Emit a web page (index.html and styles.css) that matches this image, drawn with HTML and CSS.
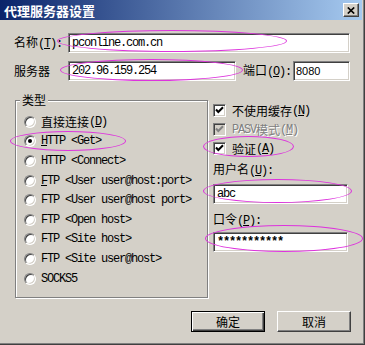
FILE: index.html
```html
<!DOCTYPE html>
<html lang="zh-CN">
<head>
  <meta charset="UTF-8">
  <title>代理服务器设置</title>
  <link rel="stylesheet" href="styles.css">
</head>
<body>

  <div class="window">
    <div class="titlebar">
      <span class="title">代理服务器设置</span>
      <span class="close-btn">
        <svg width="8" height="7" viewBox="0 0 8 7"><path d="M0.8 0.5 L7.2 6.5 M7.2 0.5 L0.8 6.5" stroke="#000" stroke-width="1.7"/></svg>
      </span>
    </div>

    <div class="content">
      <div class="row">
        <span class="label label-name">名称<span class="m">(<u>T</u>):</span></span>
        <div class="field field-name"><span class="m">pconline.com.cn</span></div>
      </div>

      <div class="row row-server">
        <span class="label label-name">服务器</span>
        <div class="field field-server"><span class="m">202.96.159.254</span></div>
        <span class="label label-port">端口<span class="m">(<u>O</u>):</span></span>
        <div class="field field-port"><span class="num">8080</span></div>
      </div>

      <div class="columns">
        <div class="group">
          <span class="legend">类型</span>
          <div class="radios">
            <div class="radio-row"><span class="radio"></span>直接连接<span class="m">(<u>D</u>)</span></div>
            <div class="radio-row"><span class="radio checked"></span><span class="m"><u>H</u>TTP &lt;Get&gt;</span></div>
            <div class="radio-row"><span class="radio"></span><span class="m">HTTP &lt;Connect&gt;</span></div>
            <div class="radio-row"><span class="radio"></span><span class="m"><u>F</u>TP &lt;User user@host:port&gt;</span></div>
            <div class="radio-row"><span class="radio"></span><span class="m">FTP &lt;User user@host port&gt;</span></div>
            <div class="radio-row"><span class="radio"></span><span class="m">FTP &lt;Open host&gt;</span></div>
            <div class="radio-row"><span class="radio"></span><span class="m">FTP &lt;Site host&gt;</span></div>
            <div class="radio-row"><span class="radio"></span><span class="m">FTP &lt;Site user@host&gt;</span></div>
            <div class="radio-row"><span class="radio"></span><span class="m">SOCKS5</span></div>
          </div>
        </div>

        <div class="options">
          <div class="check-row first">
            <span class="check"><svg width="11" height="11" viewBox="0 0 11 11"><path d="M2 4.5 L4.3 7 L9 2.2" stroke="#000" stroke-width="2" fill="none"/></svg></span>
            不使用缓存<span class="m">(<u>N</u>)</span>
          </div>
          <div class="check-row disabled">
            <span class="check off"><svg width="11" height="11" viewBox="0 0 11 11"><path d="M2 4.5 L4.3 7 L9 2.2" stroke="#808080" stroke-width="2" fill="none"/></svg></span>
            <span class="m">PASV</span>模式<span class="m">(<u>M</u>)</span>
          </div>
          <div class="check-row">
            <span class="check"><svg width="11" height="11" viewBox="0 0 11 11"><path d="M2 4.5 L4.3 7 L9 2.2" stroke="#000" stroke-width="2" fill="none"/></svg></span>
            验证<span class="m">(<u>A</u>)</span>
          </div>

          <div class="opt-label">用户名<span class="m">(<u>U</u>):</span></div>
          <div class="field field-user"><span class="m">abc</span></div>

          <div class="opt-label pw">口令<span class="m">(<u>P</u>):</span></div>
          <div class="field field-pass"><span class="m stars">***********</span></div>
        </div>
      </div>

      <div class="buttons">
        <div class="btn btn-default">确定</div>
        <div class="btn">取消</div>
      </div>
    </div>

    <!-- hand-drawn highlight rings -->
    <div class="mark mark-name"></div>
    <div class="mark mark-server"></div>
    <div class="mark mark-get"></div>
    <div class="mark mark-auth"></div>
    <div class="mark mark-user"></div>
    <div class="mark mark-pass"></div>
  </div>

</body>
</html>
```

FILE: styles.css
```css
/* Base */
* {
  margin: 0;
  padding: 0;
  box-sizing: border-box;
}

body {
  font-family: "Noto Sans CJK SC", sans-serif;
  font-size: 12px;
  color: #000;
  background-color: #d4d0c8;
}

.m {
  font-family: "Liberation Mono", monospace;
  letter-spacing: -1.2px;
}

u {
  text-decoration: underline;
}

/* Window frame */
.window {
  position: relative;
  width: 365px;
  height: 345px;
  background-color: #d4d0c8;
  box-shadow: inset -1px -1px #404040, inset -2px -2px #808080;
}

.titlebar {
  width: 362px;
  height: 20px;
  display: flex;
  align-items: center;
  justify-content: space-between;
  padding: 0 3px 0 4px;
  background: linear-gradient(to right, #0a246a, #a6caf0);
}

.title {
  color: #fff;
  font-weight: bold;
  font-size: 13px;
  line-height: 1;
}

.close-btn {
  width: 16px;
  height: 14px;
  display: flex;
  align-items: center;
  justify-content: center;
  background-color: #d4d0c8;
  border: 1px solid;
  border-color: #fff #404040 #404040 #fff;
  box-shadow: inset -1px -1px #808080;
}

/* Content */
.content {
  padding-top: 13px;
}

.row {
  display: flex;
  align-items: center;
  padding-left: 14px;
}

.row-server {
  margin-top: 8px;
}

.label {
  line-height: 14px;
  white-space: nowrap;
}

.label-name {
  width: 54px;
}

.label-port {
  width: 50px;
  margin-left: 7px;
}

.field {
  height: 20px;
  display: flex;
  align-items: center;
  padding-left: 3px;
  background-color: #fff;
  border: 1px solid;
  border-color: #808080 #fff #fff #808080;
  box-shadow: inset 1px 1px #404040, inset -1px -1px #d4d0c8;
  white-space: nowrap;
}

.field-name {
  width: 282px;
}

.field-server {
  width: 168px;
}

.field-port {
  width: 57px;
  padding-left: 2px;
}

.num {
  font-family: "Liberation Sans", sans-serif;
  font-size: 11px;
}

/* Group box */
.columns {
  display: flex;
  margin-top: 19px;
  padding-left: 15px;
}

.group {
  width: 193px;
  height: 198px;
  border: 1px solid #808080;
  box-shadow: inset 1px 1px #fff, 1px 1px #fff;
}

.legend {
  display: block;
  width: fit-content;
  margin: -8px 0 0 4px;
  padding: 0 2px;
  line-height: 14px;
  background-color: #d4d0c8;
}

.radios {
  margin-top: 5px;
  padding-left: 8px;
}

.radio-row {
  height: 19.6px;
  display: flex;
  align-items: center;
  white-space: nowrap;
}

.radio {
  width: 12px;
  height: 12px;
  margin-right: 5px;
  flex-shrink: 0;
  display: flex;
  align-items: center;
  justify-content: center;
  border-radius: 50%;
  background-color: #fff;
  border: 1px solid;
  border-color: #808080 #fff #fff #808080;
  box-shadow: inset 1px 1px #404040, inset -1px -1px #d4d0c8;
}

.radio.checked::after {
  content: "";
  width: 4px;
  height: 4px;
  border-radius: 50%;
  background-color: #000;
}

/* Right column */
.options {
  margin-left: 5px;
  width: 140px;
}

.check-row {
  height: 19px;
  display: flex;
  align-items: center;
  white-space: nowrap;
}

.check-row.first {
  margin-top: 1px;
}

.check {
  width: 13px;
  height: 13px;
  margin-right: 6px;
  flex-shrink: 0;
  display: flex;
  align-items: center;
  justify-content: center;
  background-color: #fff;
  border: 1px solid;
  border-color: #808080 #fff #fff #808080;
  box-shadow: inset 1px 1px #404040, inset -1px -1px #d4d0c8;
}

.check.off {
  background-color: #d4d0c8;
}

.disabled {
  color: #808080;
  text-shadow: 1px 1px #fff;
}

.opt-label {
  margin-top: 4px;
  line-height: 14px;
  white-space: nowrap;
}

.opt-label.pw {
  margin-top: 8px;
}

.field-user {
  margin-top: 6px;
  width: 135px;
}

.field-pass {
  margin-top: 4px;
  width: 135px;
}

.stars {
  font-weight: bold;
}

/* Buttons */
.buttons {
  display: flex;
  justify-content: flex-end;
  gap: 12px;
  padding-right: 14px;
  margin-top: 13px;
}

.btn {
  width: 74px;
  height: 21px;
  display: flex;
  align-items: center;
  justify-content: center;
  background-color: #d4d0c8;
  border: 1px solid;
  border-color: #fff #404040 #404040 #fff;
  box-shadow: inset -1px -1px #808080;
}

.btn-default {
  border-color: #000;
  box-shadow: inset 1px 1px #fff, inset -1px -1px #404040, inset -2px -2px #808080;
}

/* Highlight rings */
.mark {
  position: absolute;
  border: 1.5px solid #dd33dd;
  border-radius: 50%;
}

.mark-name {
  left: 57px;
  top: 30px;
  width: 230px;
  height: 22px;
}

.mark-server {
  left: 60px;
  top: 59px;
  width: 183px;
  height: 22px;
}

.mark-get {
  left: 10px;
  top: 131px;
  width: 116px;
  height: 20px;
}

.mark-auth {
  left: 203px;
  top: 136px;
  width: 91px;
  height: 21px;
}

.mark-user {
  left: 203px;
  top: 179px;
  width: 149px;
  height: 24px;
}

.mark-pass {
  left: 205px;
  top: 225px;
  width: 158px;
  height: 27px;
}
```
